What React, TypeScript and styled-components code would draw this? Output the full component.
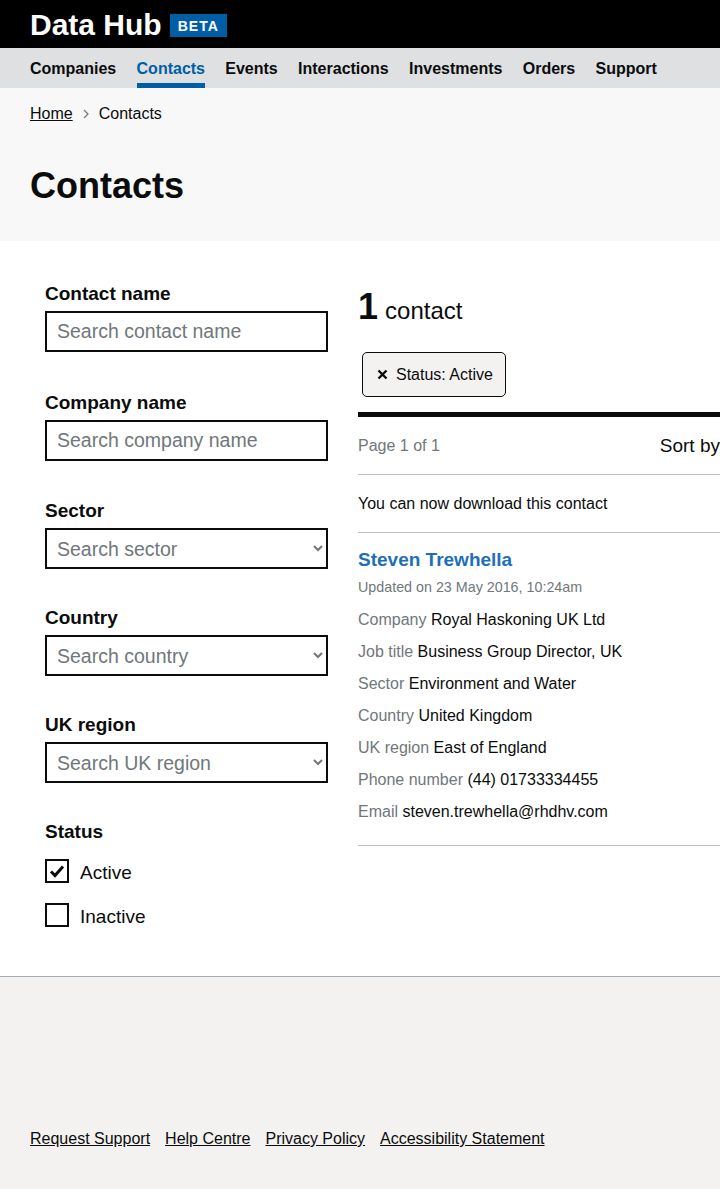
import React from 'react';
import styled, { createGlobalStyle } from 'styled-components';

const GlobalStyle = createGlobalStyle`
    html, body {
        margin: 0;
        padding: 0;
        overflow-x: hidden;
    }
    body {
        font-family: "Liberation Sans", Arial, sans-serif;
        color: #0b0c0c;
        background: #f3f2f1;
    }
    * {
        box-sizing: border-box;
    }
`;

const Page = styled.div`
    width: 1000px;
`;

const Header = styled.header`
    background: #000;
    height: 48px;
    display: flex;
    align-items: center;
    padding: 1px 30px 0;
    gap: 8px;
`;

const Logo = styled.span`
    color: #fff;
    font-weight: 700;
    font-size: 30px;
    line-height: 1;
`;

const Badge = styled.span`
    background: #005ea5;
    color: #fff;
    font-weight: 700;
    font-size: 14px;
    letter-spacing: 1px;
    padding: 4px 8px 3px;
    line-height: 16px;
    margin-top: 1px;
`;

const Nav = styled.nav`
    background: #dee0e2;
    height: 40px;
    display: flex;
    gap: 20.3px;
    padding: 0 30px;
`;

const NavItem = styled.a<{ active?: boolean }>`
    font-size: 16px;
    font-weight: 700;
    color: ${p => (p.active ? '#005ea5' : '#0b0c0c')};
    text-decoration: none;
    padding-top: 12px;
    border-bottom: 5px solid ${p => (p.active ? '#005ea5' : 'transparent')};
`;

const Hero = styled.div`
    background: #f8f8f8;
    padding: 16px 30px 35px;
`;

const Breadcrumbs = styled.div`
    display: flex;
    align-items: center;
    gap: 9px;
    font-size: 16px;
    line-height: 20px;
`;

const Crumb = styled.a`
    color: #0b0c0c;
    text-decoration: underline;
`;

const Title = styled.h1`
    margin: 42px 0 0;
    font-size: 36px;
    line-height: 40px;
    font-weight: 700;
`;

const Main = styled.main`
    background: #fff;
    display: grid;
    grid-template-columns: 313px 626px;
    padding: 39px 30px 49px;
    border-bottom: 1px solid #a1acb2;
`;

const Sidebar = styled.div`
    padding: 1px 15px 0;
    display: flex;
    flex-direction: column;
`;

const Field = styled.div<{ gap: number }>`
    margin-bottom: ${p => p.gap}px;
`;

const Label = styled.div`
    font-size: 19px;
    font-weight: 700;
    line-height: 25px;
    margin-bottom: 5px;
`;

const TextInput = styled.input`
    width: 100%;
    height: 41px;
    border: 2px solid #0b0c0c;
    font-family: inherit;
    font-size: 19.5px;
    padding: 0 10px;
    &::placeholder {
        color: #6f777b;
    }
`;

const Select = styled.select`
    width: 100%;
    height: 41px;
    border: 2px solid #0b0c0c;
    font-family: inherit;
    font-size: 19.5px;
    padding: 0 6px;
    color: #6f777b;
    background: #fff;
    border-radius: 0;
`;

const CheckRow = styled.label<{ first?: boolean }>`
    display: flex;
    align-items: flex-start;
    gap: 11px;
    height: 24px;
    font-size: 19px;
    margin-top: ${p => (p.first ? 15 : 20)}px;
`;

const CheckText = styled.span`
    line-height: 20px;
    padding-top: 4px;
`;

const Box = styled.span`
    width: 24px;
    height: 24px;
    border: 2px solid #0b0c0c;
    display: flex;
    align-items: center;
    justify-content: center;
`;

const Results = styled.div`
    padding: 0 15px;
`;

const Count = styled.div`
    display: flex;
    align-items: baseline;
    gap: 7px;
    margin-top: 6px;
`;

const CountNum = styled.span`
    font-size: 36px;
    font-weight: 700;
`;

const CountLabel = styled.span`
    font-size: 24px;
`;

const Chip = styled.button`
    margin: 24px 0 0 4px;
    display: flex;
    align-items: center;
    gap: 8px;
    height: 45px;
    padding: 0 12px 0 14px;
    background: #f3f2f1;
    border: 1px solid #0b0c0c;
    border-radius: 5px;
    font-family: inherit;
    font-size: 16px;
    color: #0b0c0c;
`;

const Bar = styled.div`
    margin-top: 15px;
    height: 5px;
    background: #0b0c0c;
`;

const Toolbar = styled.div`
    height: 58px;
    display: flex;
    align-items: center;
    justify-content: space-between;
    border-bottom: 1px solid #bfc1c3;
`;

const Muted = styled.span`
    color: #6f777b;
    font-size: 16px;
`;

const SortGroup = styled.div`
    display: flex;
    align-items: center;
    gap: 10px;
`;

const SortBy = styled.span`
    font-size: 19px;
`;

const SortSelect = styled.select`
    width: 224px;
    height: 38px;
    border: 2px solid #0b0c0c;
    font-family: inherit;
    font-size: 16px;
    background: #fff;
    border-radius: 0;
`;

const Notice = styled.div`
    height: 58px;
    display: flex;
    align-items: center;
    font-size: 16px;
    border-bottom: 1px solid #bfc1c3;
`;

const Item = styled.div`
    padding: 14px 0 17px;
    border-bottom: 1px solid #bfc1c3;
`;

const Name = styled.a`
    display: block;
    color: #1d70b8;
    font-size: 19px;
    font-weight: 700;
    line-height: 25px;
    text-decoration: none;
`;

const Updated = styled.div`
    color: #6f777b;
    font-size: 14.3px;
    line-height: 20px;
    margin: 5px 0 7px;
`;

const Meta = styled.div`
    font-size: 16px;
    line-height: 32px;
`;

const MetaKey = styled.span`
    color: #6f777b;
`;

const Footer = styled.footer`
    background: #f3f2f1;
    height: 213px;
    padding: 152px 30px 0;
    display: flex;
    gap: 15px;
`;

const FooterLink = styled.a`
    font-size: 16px;
    color: #0b0c0c;
    text-decoration: underline;
    line-height: 20px;
    height: 20px;
`;

const filters = [
    { label: 'Contact name', placeholder: 'Search contact name', gap: 38 },
    { label: 'Company name', placeholder: 'Search company name', gap: 37 },
];

const selects = [
    { label: 'Sector', placeholder: 'Search sector' },
    { label: 'Country', placeholder: 'Search country' },
    { label: 'UK region', placeholder: 'Search UK region' },
];

const meta = [
    ['Company', 'Royal Haskoning UK Ltd'],
    ['Job title', 'Business Group Director, UK'],
    ['Sector', 'Environment and Water'],
    ['Country', 'United Kingdom'],
    ['UK region', 'East of England'],
    ['Phone number', '(44) 01733334455'],
    ['Email', 'steven.trewhella@rhdhv.com'],
];

const navItems = ['Companies', 'Contacts', 'Events', 'Interactions', 'Investments', 'Orders', 'Support'];

export default function App() {
    return (
        <Page>
            <GlobalStyle />
            <Header>
                <Logo>Data Hub</Logo>
                <Badge>BETA</Badge>
            </Header>
            <Nav>
                {navItems.map(n => (
                    <NavItem key={n} active={n === 'Contacts'}>{n}</NavItem>
                ))}
            </Nav>
            <Hero>
                <Breadcrumbs>
                    <Crumb>Home</Crumb>
                    <svg width="8" height="12" viewBox="0 0 8 12">
                        <path d="M2 2l4 4-4 4" fill="none" stroke="#6f777b" strokeWidth="1.2" />
                    </svg>
                    <span>Contacts</span>
                </Breadcrumbs>
                <Title>Contacts</Title>
            </Hero>
            <Main>
                <Sidebar>
                    {filters.map(f => (
                        <Field key={f.label} gap={f.gap}>
                            <Label>{f.label}</Label>
                            <TextInput placeholder={f.placeholder} />
                        </Field>
                    ))}
                    {selects.map(f => (
                        <Field key={f.label} gap={36}>
                            <Label>{f.label}</Label>
                            <Select defaultValue="">
                                <option value="">{f.placeholder}</option>
                            </Select>
                        </Field>
                    ))}
                    <div>
                        <Label>Status</Label>
                        <CheckRow first>
                            <Box>
                                <svg width="16" height="14" viewBox="0 0 16 14">
                                    <path d="M2 7.5l4 4 8-9" fill="none" stroke="#0b0c0c" strokeWidth="3" />
                                </svg>
                            </Box>
                            <CheckText>Active</CheckText>
                        </CheckRow>
                        <CheckRow>
                            <Box />
                            <CheckText>Inactive</CheckText>
                        </CheckRow>
                    </div>
                </Sidebar>
                <Results>
                    <Count>
                        <CountNum>1</CountNum>
                        <CountLabel>contact</CountLabel>
                    </Count>
                    <Chip>
                        <svg width="11" height="11" viewBox="0 0 11 11">
                            <path d="M1.5 1.5l8 8M9.5 1.5l-8 8" stroke="#0b0c0c" strokeWidth="2.4" />
                        </svg>
                        Status: Active
                    </Chip>
                    <Bar />
                    <Toolbar>
                        <Muted>Page 1 of 1</Muted>
                        <SortGroup>
                            <SortBy>Sort by</SortBy>
                            <SortSelect defaultValue="recent">
                                <option value="recent">Recently updated</option>
                            </SortSelect>
                        </SortGroup>
                    </Toolbar>
                    <Notice>You can now download this contact</Notice>
                    <Item>
                        <Name>Steven Trewhella</Name>
                        <Updated>Updated on 23 May 2016, 10:24am</Updated>
                        {meta.map(([k, v]) => (
                            <Meta key={k}>
                                <MetaKey>{k}</MetaKey> {v}
                            </Meta>
                        ))}
                    </Item>
                </Results>
            </Main>
            <Footer>
                <FooterLink>Request Support</FooterLink>
                <FooterLink>Help Centre</FooterLink>
                <FooterLink>Privacy Policy</FooterLink>
                <FooterLink>Accessibility Statement</FooterLink>
            </Footer>
        </Page>
    );
}
